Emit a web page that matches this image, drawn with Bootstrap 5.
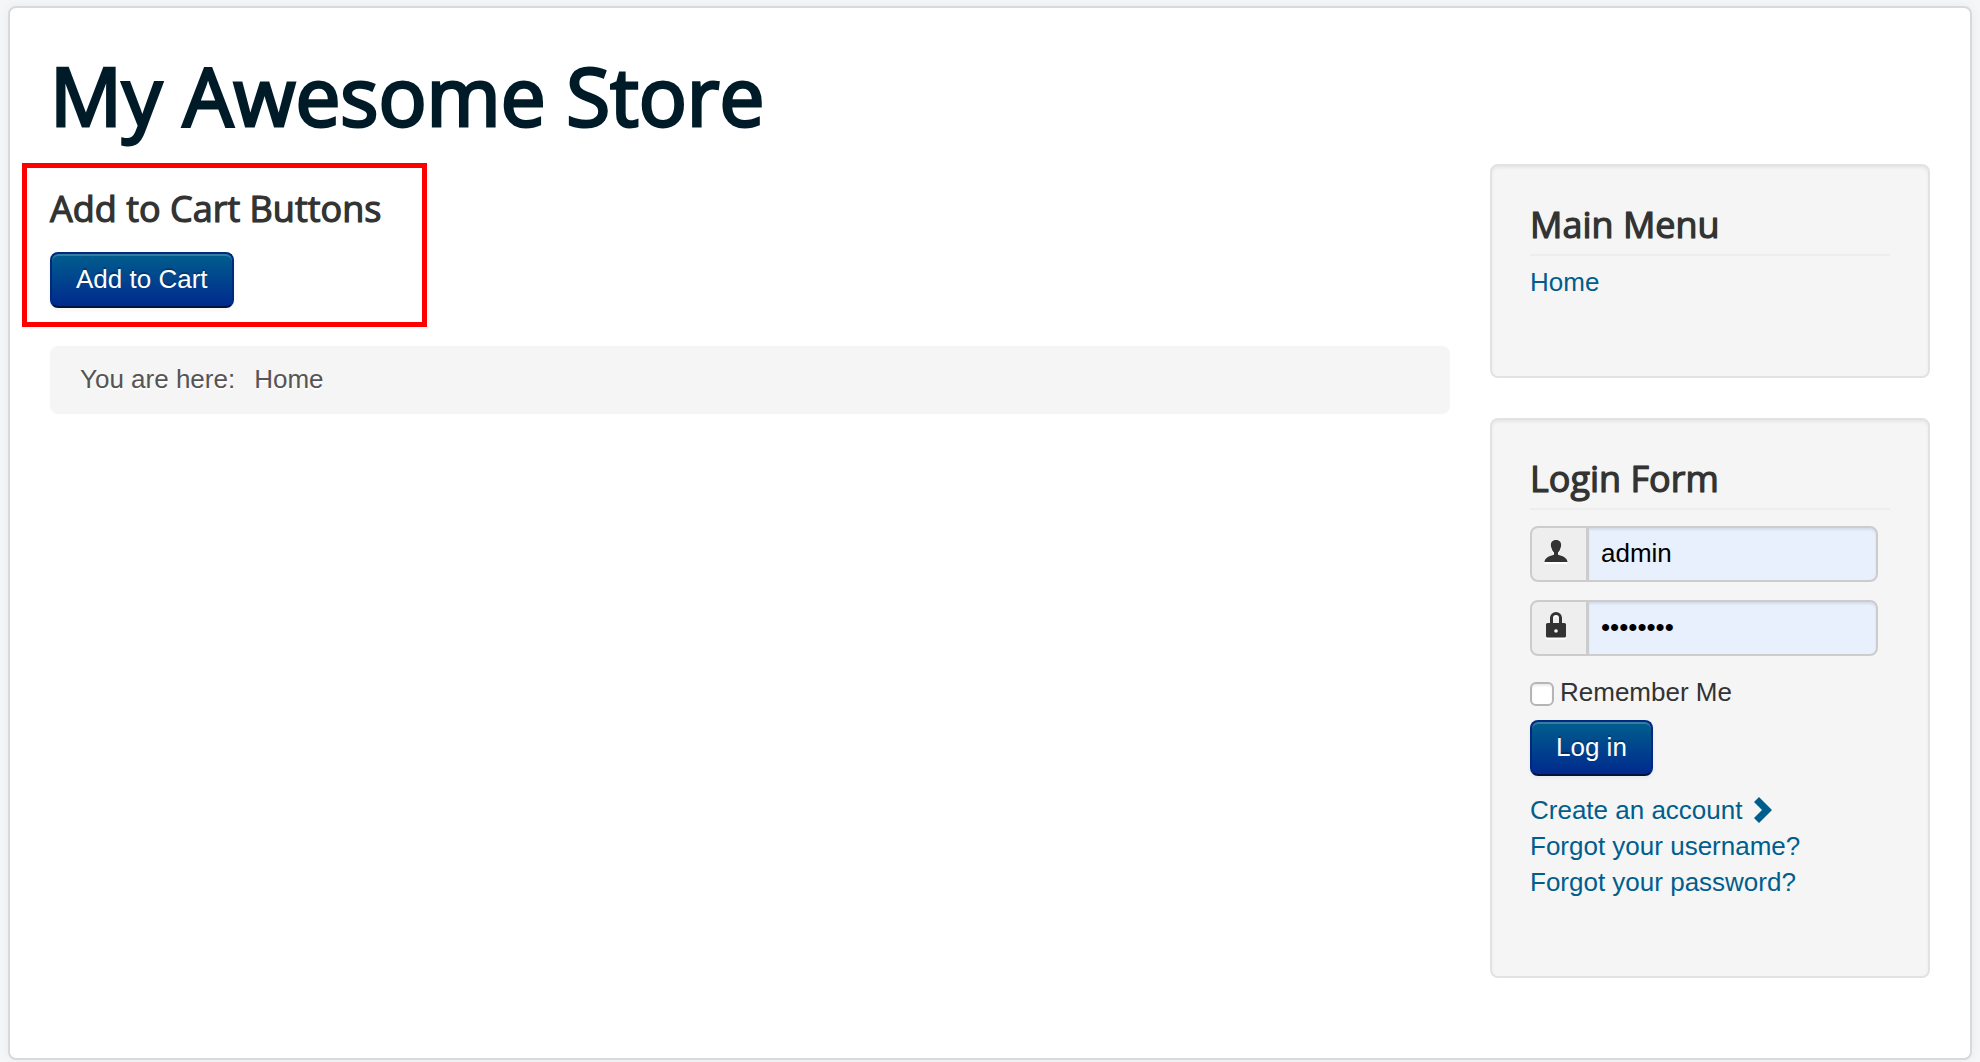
<!DOCTYPE html>
<html lang="en">
<head>
<meta charset="utf-8">
<meta name="viewport" content="width=device-width, initial-scale=1">
<title>My Awesome Store</title>
<link href="https://cdn.jsdelivr.net/npm/bootstrap@5.3.0/dist/css/bootstrap.min.css" rel="stylesheet">
<style>
  body { background: #f4f6f7; color: #333; font-family: "Liberation Sans", Arial, sans-serif; font-size: 26px; line-height: 36px; }
  a { color: #005e8d; text-decoration: none; }
  a:hover { text-decoration: underline; }
  h1, h3 { font-family: "Open Sans", sans-serif; font-weight: 400; }
  .site-body { min-height: calc(100vh - 8px); margin: 6px 8px 2px; padding: 40px; background: #fff; border: 2px solid #d9d9d9; border-radius: 8px; box-shadow: 0 0 12px rgba(0,0,0,.05); }
  .site-title { color: #001b28; font-size: 80px; line-height: 94px; padding-bottom: 22px; margin: 0; -webkit-text-stroke: 3px #001b28; }
  .site-row { --bs-gutter-x: 40px; --bs-gutter-y: 40px; }
  .module-title { font-size: 36px; line-height: 42px; margin: 0; -webkit-text-stroke: 1px #333; text-shadow: 0 0 1px #333; }
  .side-module { background: #f5f5f5; border: 2px solid #e2e2e2; border-radius: 8px; padding: 38px 38px 76px; box-shadow: inset 0 2px 3px rgba(0,0,0,.06); }
  .side-module .module-title { border-bottom: 2px solid #ededed; padding-bottom: 8px; margin-bottom: 8px; }
  .side-stack { gap: 40px; }
  .cart-module { position: relative; padding: 24px 0 38px; }
  .cart-module .module-title { margin-bottom: 22px; }
  .cart-module::after { content: ""; position: absolute; left: -28px; top: -1px; width: 405px; height: 164px; border: 5px solid #f00; pointer-events: none; }
  .btn-store { font-size: 26px; line-height: 36px; padding: 7px 24px 9px; color: #fff; border: 2px solid #002a80; border-bottom-color: #00133b; border-radius: 8px; background: linear-gradient(#005e8d, #002a8d); box-shadow: inset 0 2px 0 rgba(255,255,255,.2), 0 2px 4px rgba(0,0,0,.05); text-shadow: 0 -2px 0 rgba(0,0,0,.25); }
  .btn-store:hover { color: #fff; background: #002a8d; border-color: #002a80; }
  .crumbs { background: #f5f5f5; border-radius: 8px; padding: 15px 30px 17px; margin: 0; color: #555; text-shadow: 0 2px 0 #fff; gap: 19px; font-size: 26px; }
  .login-form { padding-top: 8px; }
  .login-field { width: 348px; max-width: 100%; margin-bottom: 18px; flex-wrap: nowrap; }
  .login-field .input-group-text { width: 58px; padding: 0 0 4px 12px; background: #eee; border: 2px solid #ccc; border-radius: 8px; color: #333; }
  .login-field .form-control { height: 56px; padding: 7px 12px 9px; font-size: 26px; line-height: 36px; color: #000; background: #e8effd; border: 2px solid #ccc; border-radius: 8px; box-shadow: inset 0 2px 2px rgba(0,0,0,.075); }
  .remember { gap: 6px; margin: 0 0 10px; }
  .remember .form-check-input { width: 24px; height: 24px; margin: 8px 0 0; border: 2px solid #b5b5b5; border-radius: 6px; box-shadow: inset 0 2px 2px rgba(0,0,0,.08); }
  .login-links { padding: 16px 0 0; margin: 0; }
  .icon-shadow { filter: drop-shadow(0 2px 0 #fff); }
  .link-arrow { padding-bottom: 4px; }
</style>
<script defer src="https://cdn.jsdelivr.net/npm/bootstrap@5.3.0/dist/js/bootstrap.bundle.min.js"></script>
</head>
<body>
<div class="site-body">
  <header><h1 class="site-title">My Awesome Store</h1></header>
  <div class="row site-row">
    <main class="col-md-9">
      <section class="cart-module">
        <h3 class="module-title">Add to Cart Buttons</h3>
        <button type="button" class="btn btn-store d-block">Add to Cart</button>
      </section>
      <nav aria-label="Breadcrumbs">
        <ul class="crumbs list-unstyled d-flex flex-wrap">
          <li>You are here:</li>
          <li aria-current="page">Home</li>
        </ul>
      </nav>
    </main>
    <aside class="col-md-3">
      <div class="side-stack d-flex flex-column">
        <section class="side-module">
          <h3 class="module-title">Main Menu</h3>
          <a href="#">Home</a>
        </section>
        <section class="side-module">
          <h3 class="module-title">Login Form</h3>
          <form class="login-form">
            <div class="input-group login-field">
              <label class="input-group-text" for="user" aria-label="Username">
                <svg class="icon-shadow" width="24" height="28" viewBox="0 0 24 28" fill="#333" aria-hidden="true"><path d="M12 2c-3.600 0-5.300 2.300-5.100 5.500 0 1.300.4 2 .6 2.500.5 2.300 1.500 3.500 2.500 4.400v2.300C6 18 1 19 .5 24h23c-.5-5-5.500-6-9.500-7.300v-2.300c1-.9 2-2.100 2.500-4.400.2-.5.600-1.200.600-2.500C17.300 4.300 15.600 2 12 2z"/></svg>
              </label>
              <input id="user" type="text" class="form-control" value="admin" autocomplete="username">
            </div>
            <div class="input-group login-field">
              <label class="input-group-text" for="pass" aria-label="Password">
                <svg class="icon-shadow" width="24" height="32" viewBox="0 0 24 32" fill="#333" aria-hidden="true"><path fill-rule="evenodd" d="M6 13V8a6 6 0 0 1 12 0v5h2.500a1.500 1.500 0 0 1 1.500 1.500V26a1.500 1.500 0 0 1-1.500 1.500h-17A1.500 1.500 0 0 1 2 26V14.500A1.500 1.500 0 0 1 3.500 13zm3 0h6V8a3 3 0 0 0-6 0zm3 6.200a1.800 1.800 0 1 0 0 3.600 1.800 1.800 0 0 0 0-3.600z"/></svg>
              </label>
              <input id="pass" type="password" class="form-control" value="password" autocomplete="current-password">
            </div>
            <div class="remember d-flex">
              <input id="remember" type="checkbox" class="form-check-input">
              <label for="remember">Remember Me</label>
            </div>
            <button type="submit" class="btn btn-store d-block">Log in</button>
            <ul class="login-links list-unstyled">
              <li><a href="#">Create an account <svg class="link-arrow" width="24" height="30" viewBox="0 0 24 26" fill="#005e8d" aria-hidden="true"><path d="M9 0l13 13L9 26l-5-5 8-8-8-8z"/></svg></a></li>
              <li><a href="#">Forgot your username?</a></li>
              <li><a href="#">Forgot your password?</a></li>
            </ul>
          </form>
        </section>
      </div>
    </aside>
  </div>
</div>
</body>
</html>
